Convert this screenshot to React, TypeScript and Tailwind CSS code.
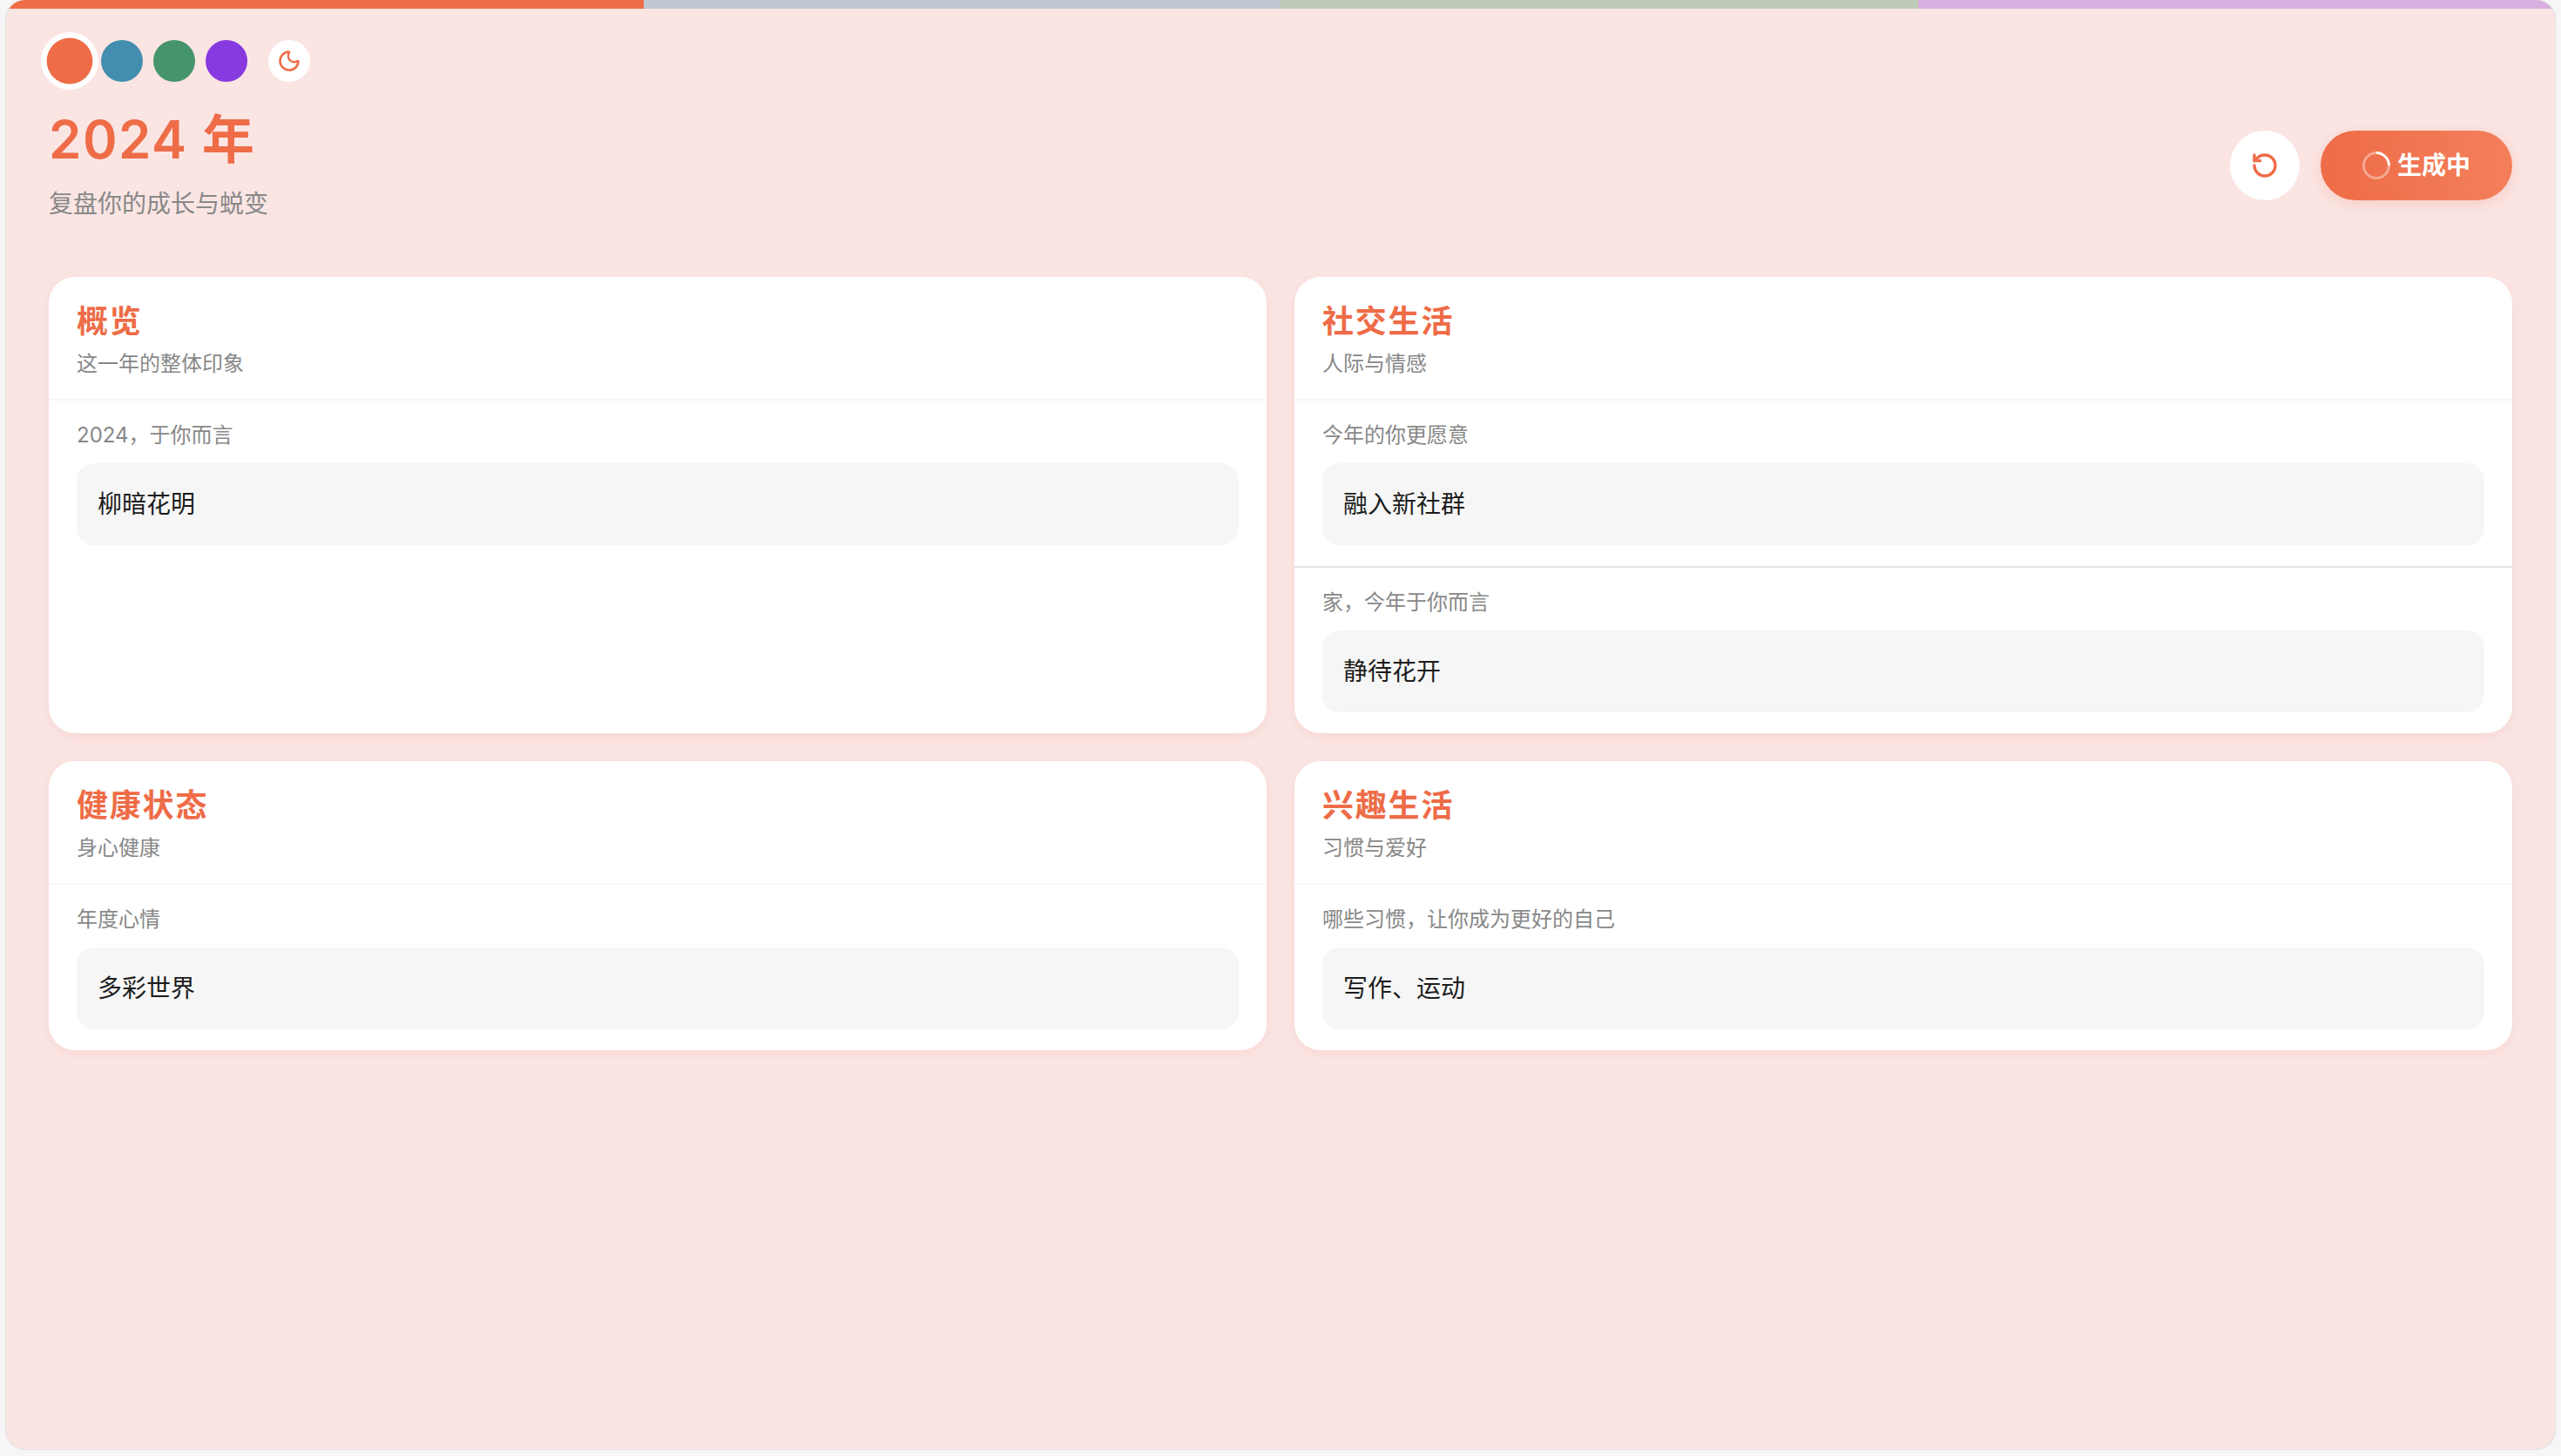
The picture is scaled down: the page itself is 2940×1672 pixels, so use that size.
import { RotateCcw, Moon } from "lucide-react";

type Field = { label: string; value: string };
type Section = { title: string; subtitle: string; fields: Field[] };

const sections: Section[] = [
  {
    title: "概览",
    subtitle: "这一年的整体印象",
    fields: [{ label: "2024，于你而言", value: "柳暗花明" }],
  },
  {
    title: "社交生活",
    subtitle: "人际与情感",
    fields: [
      { label: "今年的你更愿意", value: "融入新社群" },
      { label: "家，今年于你而言", value: "静待花开" },
    ],
  },
  {
    title: "健康状态",
    subtitle: "身心健康",
    fields: [{ label: "年度心情", value: "多彩世界" }],
  },
  {
    title: "兴趣生活",
    subtitle: "习惯与爱好",
    fields: [{ label: "哪些习惯，让你成为更好的自己", value: "写作、运动" }],
  },
];

function Card({ section }: { section: Section }) {
  return (
    <div className="bg-white rounded-[30px] shadow-[0_4px_12px_rgba(238,108,71,0.1)] overflow-hidden">
      <div className="h-[142px] px-8 pt-[30px] border-b-2 border-[#f7f7f7]">
        <h2 className="text-[36px] leading-[42px] font-bold tracking-[0.05em] text-[#ee6c47]">{section.title}</h2>
        <p className="mt-[10px] text-[24px] leading-[36px] text-[#888888]">{section.subtitle}</p>
      </div>
      {section.fields.map((f, i) => (
        <div key={f.label} className={`px-8 pt-[22px] pb-6 ${i > 0 ? "border-t-2 border-[#e5e5e5]" : ""}`}>
          <p className="text-[24px] leading-[36px] text-[#888888]">{f.label}</p>
          <div className="mt-[14px] h-[94px] rounded-[20px] bg-[#f6f6f6] px-6 flex items-center text-[28px] text-[#1c1c1c]">
            {f.value}
          </div>
        </div>
      ))}
    </div>
  );
}

export default function App() {
  return (
    <div
      className="h-[1672px] bg-[#f6f6f6] px-[7px] pb-[8px]"
      style={{ fontFamily: '"Inter", "Noto Sans CJK SC", sans-serif' }}
    >
      <div className="h-full bg-[#fae5e3] rounded-[22px] overflow-hidden shadow-[0_0_2px_rgba(0,0,0,0.25)]">
        <div className="flex h-[10px]">
          <div className="flex-1 bg-[#ee6c47]" />
          <div className="flex-1 bg-[#c0c8d2]" />
          <div className="flex-1 bg-[#bdcbb8]" />
          <div className="flex-1 bg-[#d8b0e0]" />
        </div>

        <div className="px-[49px]">
          <div className="flex items-center gap-3 pt-9">
            <div className="w-12 h-12 rounded-full bg-[#ee6c47] scale-110 shadow-[0_0_0_6px_white]" />
            <div className="w-12 h-12 rounded-full bg-[#438eae]" />
            <div className="w-12 h-12 rounded-full bg-[#45946c]" />
            <div className="w-12 h-12 rounded-full bg-[#873adf]" />
            <button className="ml-3 w-12 h-12 rounded-full bg-white flex items-center justify-center text-[#ee6c47]">
              <Moon size={28} strokeWidth={2.2} />
            </button>
          </div>

          <div className="flex items-center justify-between mt-8">
            <div>
              <h1 className="text-[60px] leading-[68px] font-semibold tracking-[0.025em] text-[#ee6c47]">2024 年</h1>
              <p className="mt-5 text-[28px] leading-[40px] text-[#888888]">复盘你的成长与蜕变</p>
            </div>
            <div className="flex items-center gap-6">
              <button className="w-20 h-20 rounded-full bg-white flex items-center justify-center text-[#ee6c47]">
                <RotateCcw size={32} strokeWidth={2.5} />
              </button>
              <button className="w-[220px] h-20 rounded-full bg-gradient-to-r from-[#ee6c47] to-[#f47f5b] shadow-[0_4px_16px_rgba(238,108,71,0.2)] flex items-center justify-center gap-[8px] text-white text-[28px] font-semibold">
                <span className="w-8 h-8 rounded-full border-[3px] border-white/40 border-t-white rotate-45" />
                生成中
              </button>
            </div>
          </div>

          <div className="grid grid-cols-2 gap-8 mt-16">
            {sections.map((s) => (
              <Card key={s.title} section={s} />
            ))}
          </div>
        </div>
      </div>
    </div>
  );
}
